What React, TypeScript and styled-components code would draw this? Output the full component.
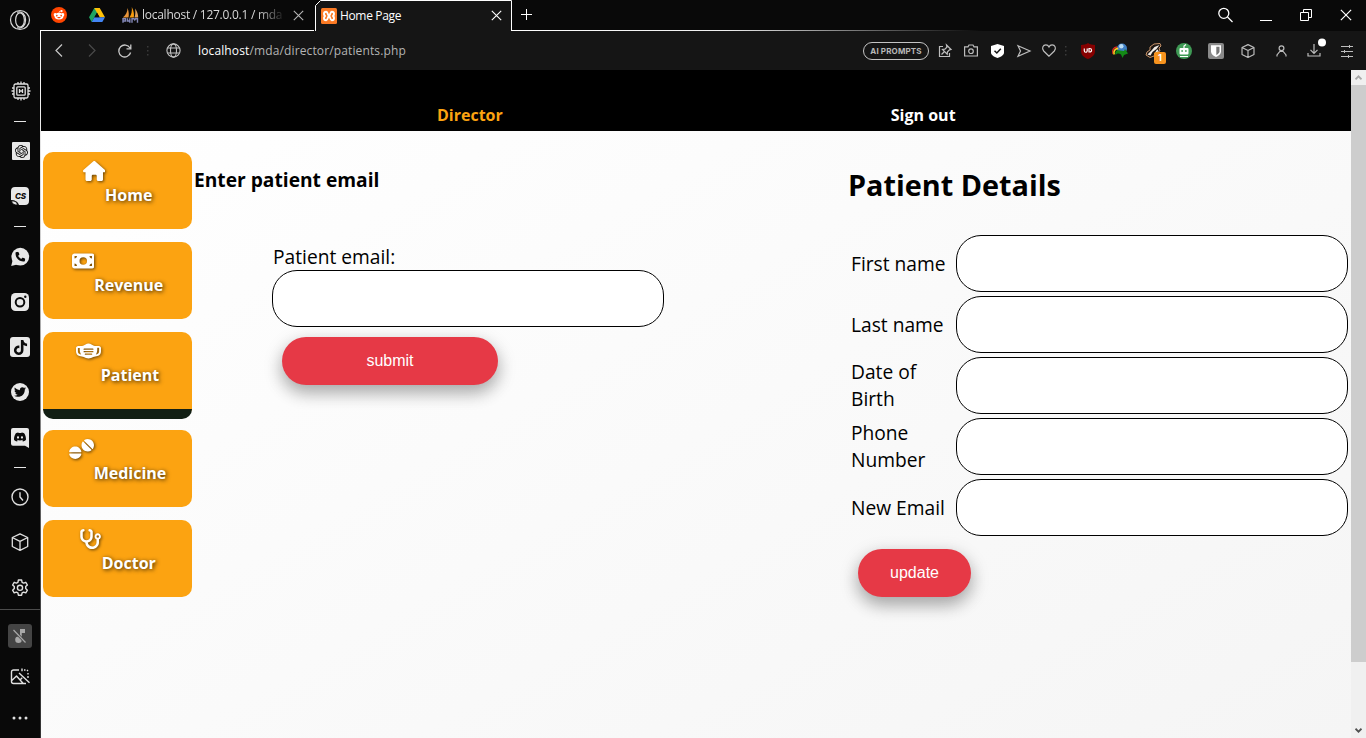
import React from 'react';
import styled, { createGlobalStyle, css } from 'styled-components';
import { FaHouse, FaMoneyBill, FaMaskFace, FaTablets, FaStethoscope, FaTiktok, FaTwitter, FaDiscord, FaPhone, FaRedditAlien } from 'react-icons/fa6';
import { SiOpenai } from 'react-icons/si';

const GlobalStyle = createGlobalStyle`
  *, *::before, *::after { box-sizing: border-box; }
  body { margin: 0; background: #090909; overflow: hidden; }
  svg { display: block; flex: none; }
`;

const Window = styled.div`
  display: flex;
  width: 1366px;
  height: 738px;
  background: #090909;
  font-family: 'Open Sans', sans-serif;
`;

/* ---------- browser side rail ---------- */
const Rail = styled.aside`
  display: flex;
  flex-direction: column;
  width: 41px;
  height: 738px;
  flex: none;
  background: linear-gradient(#fff, #cfcfcf 30%, #4a4a4a 75%, #333) no-repeat 40px 30px / 1px 708px;
`;

const RailSlot = styled.div<{ $h: number; $drop?: number; $shift?: number }>`
  display: flex;
  align-items: center;
  justify-content: center;
  width: 40px;
  height: ${(p) => p.$h}px;
  padding: ${(p) => p.$drop ?? 0}px 0 0 ${(p) => p.$shift ?? 0}px;
  flex: none;
`;

const RailDash = styled.span`
  width: 12px;
  height: 1px;
  background: #e6e6e6;
`;

const RailRule = styled.hr`
  width: 40px;
  height: 1px;
  margin: 0;
  border: 0;
  flex: none;
  background: #4c4c4c;
`;

const AppTile = styled.span<{ $size?: number; $radius?: number }>`
  display: flex;
  align-items: center;
  justify-content: center;
  width: ${(p) => p.$size ?? 18}px;
  height: ${(p) => p.$size ?? 18}px;
  border-radius: ${(p) => p.$radius ?? 4}px;
  background: #e8e8e8;
  color: #0b0b0b;
`;

const MutedTile = styled.span`
  display: flex;
  align-items: center;
  justify-content: center;
  width: 24px;
  height: 24px;
  border-radius: 3px;
  background: #444;
`;

/* ---------- browser top ---------- */
const Frame = styled.div`
  display: flex;
  flex-direction: column;
  width: 1325px;
`;

const TabStrip = styled.div`
  display: flex;
  height: 31px;
  flex: none;
`;

const RestingTabs = styled.div`
  display: flex;
  align-items: center;
  width: 274px;
  height: 31px;
  margin-left: -1px;
  border-bottom: 1px solid #fff;
`;

const TabSlot = styled.div<{ $w: number; $end?: boolean }>`
  display: flex;
  justify-content: ${(p) => (p.$end ? 'flex-end' : 'center')};
  padding-right: ${(p) => (p.$end ? 3 : 0)}px;
  width: ${(p) => p.$w}px;
  flex: none;
`;

const TabTitle = styled.span<{ $active?: boolean }>`
  overflow: hidden;
  white-space: nowrap;
  font-size: 12px;
  line-height: 16px;
  ${(p) =>
    p.$active
      ? css`
          width: 148px;
          color: #fff;
          letter-spacing: -0.35px;
        `
      : css`
          width: 148px;
          color: #d8d8d8;
          letter-spacing: -0.26px;
          mask-image: linear-gradient(90deg, #000 78%, transparent 97%);
        `}
`;

const ActiveTab = styled.div`
  position: relative;
  display: flex;
  align-items: center;
  width: 197px;
  height: 31px;
  margin-left: 1px;
`;

const TabOutline = styled.svg`
  position: absolute;
  left: 0;
  top: 0;
`;

const TabBody = styled.div`
  position: relative;
  display: flex;
  align-items: center;
  width: 100%;
  padding-left: 6px;
  gap: 3px;
`;

const StripRest = styled.div`
  display: flex;
  flex: 1;
  align-items: center;
  justify-content: space-between;
  padding: 0 0 1px 9px;
  background: linear-gradient(90deg, #fff, #eee 25%, #444 47%, transparent 55%) no-repeat 0 30px / 100% 1px;
`;

const WindowButtons = styled.div`
  display: flex;
  align-items: center;
  height: 30px;
`;

const Toolbar = styled.div`
  display: flex;
  align-items: center;
  height: 39px;
  flex: none;
  padding-left: 1px;
  background: #151515;
`;

const Slot = styled.div<{ $w: number; $shift?: number }>`
  position: relative;
  display: flex;
  align-items: center;
  justify-content: center;
  width: ${(p) => p.$w}px;
  padding-left: ${(p) => p.$shift ?? 0}px;
  height: 100%;
  flex: none;
  > svg { overflow: visible; }
`;

const Address = styled.div`
  padding-left: 6px;
  font-size: 12px;
  letter-spacing: 0.13px;
  color: #b4b4b4;
  b { font-weight: 400; color: #fff; }
`;

const ToolbarEnd = styled.div`
  display: flex;
  align-items: center;
  height: 100%;
  margin-left: auto;
`;

const PromptPill = styled.span`
  display: flex;
  align-items: center;
  justify-content: center;
  width: 66px;
  height: 18px;
  border: 1px solid #c4c4c4;
  border-radius: 9px;
  font: 700 8px/10px Inter, sans-serif;
  letter-spacing: 0.15px;
  color: #b8b8b8;
`;

const Badge = styled.span`
  position: absolute;
  left: 23px;
  top: 21px;
  width: 12px;
  height: 12px;
  border-radius: 2px;
  background: #f7931e;
  color: #fff;
  font: 700 9px/12px Inter, sans-serif;
  text-align: center;
`;

/* ---------- page ---------- */
const Viewport = styled.div`
  display: flex;
  height: 668px;
`;

const Page = styled.div`
  width: 1310px;
  display: flex;
  flex-direction: column;
`;

const Nav = styled.nav`
  display: flex;
  gap: 388px;
  height: 61px;
  flex: none;
  padding: 34px 0 0 396px;
  background: #000;
`;

const NavLink = styled.a<{ $current?: boolean }>`
  font-size: 16px;
  font-weight: 700;
  line-height: 22px;
  color: ${(p) => (p.$current ? '#fca311' : '#fff')};
`;

const Main = styled.main`
  display: flex;
  flex: 1;
  background: linear-gradient(150deg, #fff, #f5f5f5);
`;

const Menu = styled.div`
  display: flex;
  flex-direction: column;
  gap: 13px;
  width: 151px;
  padding: 21px 0 0 2px;
`;

const MenuCard = styled.a<{ $active?: boolean; $iconWidth: number }>`
  display: flex;
  justify-content: center;
  width: 149px;
  height: 77px;
  padding-top: 9px;
  border-radius: 10px;
  background: #fca311;
  color: #fff;
  ${(p) =>
    p.$active &&
    css`
      height: 87px;
      margin-bottom: -2px;
      border-bottom: 10px solid #121f14;
    `}
  svg {
    width: ${(p) => p.$iconWidth}px;
    height: 20px;
    filter: drop-shadow(1px 1px 1.5px rgba(0, 0, 0, 0.6));
  }
`;

const MenuText = styled.span`
  padding-top: 23px;
  font-size: 16px;
  font-weight: 700;
  line-height: 22px;
  text-shadow: 1px 1px 4px rgba(0, 0, 0, 0.8);
`;

const LookupPanel = styled.section`
  width: 654px;
  padding: 35px 0 0 2px;
`;

const LookupTitle = styled.h3`
  margin: 0;
  font-size: 19.2px;
  line-height: 27px;
`;

const LookupForm = styled.form`
  display: flex;
  flex-direction: column;
  align-items: flex-start;
  padding: 50px 0 0 78px;
  > label { padding-left: 1px; }
`;

const Label = styled.label`
  font-size: 19.2px;
  line-height: 27px;
  color: #000;
`;

const TextField = styled.input`
  display: block;
  width: 392px;
  height: 57px;
  padding: 0 20px;
  border: 1px solid #000;
  border-radius: 25px;
  background: #fff;
  outline: none;
  flex: none;
`;

const PillButton = styled.button<{ $w: number }>`
  width: ${(p) => p.$w}px;
  height: 48px;
  padding: 0;
  border: 0;
  border-radius: 25px;
  background: #e63946;
  color: #fff;
  font: 16px 'Liberation Sans', sans-serif;
  box-shadow: 0 8px 16px rgba(0, 0, 0, 0.2), 0 6px 20px rgba(0, 0, 0, 0.19);
`;

const SubmitRow = styled.div`
  padding: 10px 0 0 10px;
`;

const DetailsPanel = styled.section`
  flex: 1;
  padding: 34px 0 0 2px;
`;

const DetailsTitle = styled.h2`
  margin: 0;
  font-size: 28.8px;
  line-height: 40px;
`;

const DetailsForm = styled.form`
  display: flex;
  flex-direction: column;
  gap: 4px;
  padding: 30px 0 0 2px;
`;

const FieldRow = styled.div`
  display: grid;
  grid-template-columns: 106px 392px;
  align-items: center;
  ${Label} { padding: 0 3px 0.6px 1px; }
`;

const UpdateRow = styled.div`
  padding: 9px 0 0 8px;
`;

const ScrollTrack = styled.div`
  display: flex;
  flex-direction: column;
  justify-content: space-between;
  width: 15px;
  background: #f0f0f0;
`;

const ScrollButton = styled.div`
  display: flex;
  align-items: center;
  justify-content: center;
  height: 15px;
`;

const ScrollThumb = styled.div`
  height: 577px;
  margin-bottom: auto;
  background: #cdcdcd;
`;

/* ---------- drawings ---------- */
const line = (color = '#bdbdbd', w = 1.2) => ({ fill: 'none', stroke: color, strokeWidth: w });

const OperaMark = () => (
  <svg width="22" height="22" viewBox="0 0 22 22" {...line('#d8d8d8', 1.2)}>
    <circle cx="11" cy="11" r="9.5" />
    <ellipse cx="11" cy="11" rx="4.4" ry="7.2" />
    <path d="M8 3.2c5-1.6 8.6 2.4 8.6 7.8s-3.600 9.400-8.600 7.800" />
  </svg>
);

const Chip = () => (
  <svg width="20" height="20" viewBox="0 0 20 20" {...line('#e0e0e0', 1.3)}>
    <rect x="3" y="3" width="14" height="14" rx="1.5" />
    <rect x="5.800" y="5.800" width="8.400" height="8.400" rx="1" />
    <path d="M8.500 8v4M11.500 8v4M8.500 10h3M7 3V1M10 3V.5M13 3V1M7 17v2M10 17v2.500M13 17v2M3 7H1M3 10H.5M3 13H1M17 7h2M17 10h2.500M17 13h2" />
  </svg>
);

const CsBubble = () => (
  <svg width="20" height="20" viewBox="0 0 20 20">
    <path d="M5 1h10a4 4 0 0 1 4 4v10a4 4 0 0 1-4 4H9C8 16 6 14.500 1 14V5a4 4 0 0 1 4-4z" fill="#e8e8e8" />
    <path d="M1.500 15c3.500-.4 5.500 1 6 4-3.200.2-5.400-1-6-4z" fill="#e8e8e8" stroke="#0b0b0b" strokeWidth=".8" />
    <text x="10.500" y="13" textAnchor="middle" fontFamily="Inter, sans-serif" fontStyle="italic" fontWeight="800" fontSize="8" fill="#0b0b0b">CS</text>
  </svg>
);

const WhatsApp = () => (
  <svg width="20" height="20" viewBox="0 0 20 20">
    <circle cx="10.300" cy="9.700" r="8.900" fill="#e8e8e8" />
    <path d="M1.200 19l1.500-6 4.500 4.600z" fill="#e8e8e8" />
    <g transform="translate(5.300 4.700)">
      <FaPhone size={10} color="#0b0b0b" />
    </g>
  </svg>
);

const Instagram = () => (
  <svg width="18" height="18" viewBox="0 0 18 18">
    <rect width="18" height="18" rx="4.500" fill="#e8e8e8" />
    <circle cx="9" cy="9.200" r="4.300" fill="none" stroke="#0b0b0b" strokeWidth="2" />
    <circle cx="14.300" cy="3.700" r="1.200" fill="#0b0b0b" />
  </svg>
);

const Discord = () => (
  <svg width="18" height="20" viewBox="0 0 18 20">
    <path d="M2 0h14a2 2 0 0 1 2 2v18l-4-2.200H2a2 2 0 0 1-2-2V2a2 2 0 0 1 2-2z" fill="#e8e8e8" />
    <g transform="translate(2.500 2.500)">
      <FaDiscord size={13} color="#0b0b0b" />
    </g>
  </svg>
);

const ClockFace = () => (
  <svg width="18" height="18" viewBox="0 0 18 18" {...line('#e0e0e0', 1.4)}>
    <circle cx="9" cy="9" r="8" />
    <path d="M9 4.200V9l3 3.500" />
  </svg>
);

const Cube = ({ size = 18, color = '#e0e0e0' }: { size?: number; color?: string }) => (
  <svg width={size} height={size} viewBox="0 0 18 18" {...line(color, size > 15 ? 1.3 : 1.5)} strokeLinejoin="round">
    <path d="M9 .8l7.700 3.700v9L9 17.300 1.300 13.500v-9zM1.300 4.500L9 8.400l7.700-3.900M9 8.400v8.900" />
  </svg>
);

const Gear = () => (
  <svg width="18" height="18" viewBox="0 0 18 18" {...line('#e0e0e0', 1.4)} strokeLinejoin="round">
    <path d="M7.400 1h3.200l.5 2.300 1.500.8 2.200-.8 1.600 2.700-1.700 1.600v2l1.700 1.600-1.600 2.700-2.200-.8-1.500.8-.5 2.300H7.400l-.5-2.300-1.500-.8-2.200.8-1.600-2.700 1.700-1.600v-2L1.600 6l1.600-2.700 2.200.8 1.500-.8z" />
    <circle cx="9" cy="8.800" r="2.600" />
  </svg>
);

const MutedNote = () => (
  <svg width="16" height="16" viewBox="0 0 16 16">
    <path d="M8 1h5v4H9.800v7H8z" fill="#a8a8a8" />
    <circle cx="6.500" cy="11.800" r="3.300" fill="#a8a8a8" />
    <path d="M1.500 2l12 12.500" stroke="#444" strokeWidth="2.600" />
    <path d="M1.500 2l12 12.500" stroke="#a8a8a8" strokeWidth="1.200" />
  </svg>
);

const NoImage = () => (
  <svg width="20" height="18" viewBox="0 0 20 18" {...line('#e0e0e0', 1.4)} strokeLinejoin="round">
    <path d="M9 2H3.500a2 2 0 0 0-2 2v9.500a2 2 0 0 0 2 2h12.500M1.800 12.500l4.700-4.500 6.500 7.200M10.500 11.500l1.700-1.800M9 5l10.500 9.800M12 .5v2.800M14 2h1.500M17 2l1 1M18 5v1.500M18 8v2" />
  </svg>
);

const Dots = () => (
  <svg width="16" height="4" viewBox="0 0 16 4" fill="#e0e0e0">
    <circle cx="2" cy="2" r="1.500" />
    <circle cx="8" cy="2" r="1.500" />
    <circle cx="14" cy="2" r="1.500" />
  </svg>
);

const RedditMark = () => (
  <svg width="16" height="16" viewBox="0 0 16 16">
    <circle cx="8" cy="8" r="8" fill="#ff4500" />
    <g transform="translate(2.500 2.200)">
      <FaRedditAlien size={11} color="#fff" />
    </g>
  </svg>
);

const DriveMark = () => (
  <svg width="16" height="14" viewBox="0 0 16 14">
    <path d="M5.300 0h5.400l-2.700 4.700L2.700 14 0 9.300z" fill="#1ea362" />
    <path d="M5.300 0h5.400L16 9.300h-5.400z" fill="#ffc107" />
    <path d="M5.400 9.300H16L13.300 14H2.700z" fill="#4285f4" />
    <path d="M8 4.700l2.600 4.600H5.400z" fill="#090909" />
  </svg>
);

const SailMark = () => (
  <svg width="17" height="16" viewBox="0 0 17 16">
    <path d="M5.500 1C7 5 7 8 6.500 10.500H.8C4 8 5.500 5 5.500 1z" fill="#e8953a" />
    <path d="M9.800 0C12 4 12.300 7.500 11.800 10.500H7.300C9.500 7.500 10.200 4 9.800 0z" fill="#f89c0e" />
    <path d="M13 1.500c2.300 2.800 3.200 6 3.200 9h-3.700c1-3 1.100-6 .5-9z" fill="#e0a25c" />
    <path d="M1 15.700v-4h2.500v2.300H1M5.500 11.300V14h2.300v-2.700M7.800 13v2.700M10 15.700v-4h2l.8 1.300.8-1.300h1.900v4" fill="none" stroke="#8388b8" strokeWidth="1.400" />
  </svg>
);

const XamppMark = () => (
  <svg width="16" height="16" viewBox="0 0 16 16">
    <rect width="16" height="16" rx="1.500" fill="#fb7a24" />
    <path d="M5.200 3.800C3.800 3.800 3 4.600 3 5.800S3.700 8 4.800 8C3.700 8 3 9 3 10.200s.8 2 2.200 2C7 12.200 6.800 8 8 8s1 4.200 2.800 4.200c1.400 0 2.200-.8 2.200-2S12.300 8 11.200 8C12.300 8 13 7 13 5.800s-.8-2-2.200-2C9 3.800 9.200 8 8 8S7 3.800 5.200 3.800z" fill="none" stroke="#fff" strokeWidth="1.900" />
  </svg>
);

const Cross = ({ size = 11, color = '#fff' }: { size?: number; color?: string }) => (
  <svg width={size} height={size} viewBox="0 0 11 11" {...line(color, 1.1)}>
    <path d="M.8.8l9.400 9.400M10.200.8L.8 10.200" />
  </svg>
);

const Separator = () => (
  <svg width="2" height="12" viewBox="0 0 2 12" fill="#3a3a3a">
    <path d="M0 1h1.500v1.500H0zM0 5h1.500v1.500H0zM0 9h1.500v1.500H0z" />
  </svg>
);

const Globe = () => (
  <svg width="15" height="15" viewBox="0 0 15 15" {...line('#c4c4c4', 1.1)}>
    <circle cx="7.500" cy="7.500" r="6.600" />
    <ellipse cx="7.500" cy="7.500" rx="3" ry="6.600" />
    <path d="M1.800 5h11.400M1.800 10h11.400" />
  </svg>
);

const PinNote = () => (
  <svg width="14" height="14" viewBox="0 0 14 14" {...line()}>
    <path d="M5 2.500H1.500v10h10V9M3.500 10.500l3-3M8.500 1l4.500 4.500-1.500.3-2 2-.3 2.400L4.500 5.500l2.400-.3 2-2z" />
  </svg>
);

const Camera = () => (
  <svg width="14" height="13" viewBox="0 0 14 13" {...line()}>
    <path d="M.6 2.800H4L5 1h4l1 1.800h3.400v9.200H.6z" />
    <circle cx="7" cy="7.200" r="2.300" />
  </svg>
);

const ShieldCheck = () => (
  <svg width="13" height="14" viewBox="0 0 13 14">
    <path d="M6.500 0L13 2v6.500c0 2.500-3 4.500-6.500 5.500C3 13 0 11 0 8.500V2z" fill="#fff" />
    <path d="M3.500 6.800l2.300 2.200 4-4.200" fill="none" stroke="#151515" strokeWidth="1.500" />
  </svg>
);

const SendArrow = () => (
  <svg width="14" height="12" viewBox="0 0 14 12" {...line()}>
    <path d="M1 .8L13 6 1 11.200 3.500 6z" />
  </svg>
);

const Heart = () => (
  <svg width="14" height="13" viewBox="0 0 14 13" {...line()}>
    <path d="M7 12.200L1.700 7C-.6 4.200 1 .8 3.900.8 5.600.8 6.500 1.800 7 2.900 7.500 1.800 8.400.8 10.100.8 13 .8 14.600 4.200 12.300 7z" />
  </svg>
);

const UblockMark = () => (
  <svg width="14" height="16" viewBox="0 0 14 16">
    <path d="M7 0c2 1.500 4.500 1.900 7 1.900V8c0 4-3 6.500-7 8-4-1.500-7-4-7-8V1.900C2.500 1.900 5 1.500 7 0z" fill="#850000" />
    <path d="M3.300 5.500v2.300a1.200 1.200 0 0 0 2.900 0V5.500M8 5.500v3.500h.8a1.750 1.750 0 0 0 0-3.500z" fill="none" stroke="#fff" strokeWidth="1.200" />
  </svg>
);

const DownloaderMark = () => (
  <svg width="16" height="15" viewBox="0 0 16 15">
    <circle cx="10" cy="5.500" r="5" fill="#3f7fc4" />
    <circle cx="9.300" cy="3.300" r="2.200" fill="#b7dcf4" />
    <path d="M1 11C-.3 7 1.500 4.300 5 4" fill="none" stroke="#d92b1f" strokeWidth="1.300" />
    <path d="M2.200 11.500C1.200 8 3 5.600 6.200 5.400" fill="none" stroke="#ffd21f" strokeWidth="1.600" />
    <path d="M3.700 12C2.300 8.500 4.500 6.500 8 7.500l4 .5 1-2 3 4.500-4 1.500-1.500 3-1.500-3.500C7 10 5 10 3.700 12z" fill="#138a16" />
  </svg>
);

const BadgerMark = () => (
  <svg width="17" height="15" viewBox="0 0 17 15">
    <path d="M1 12l1-3 3-2V4l4-3 6-.5 1 2.500-2 2 1 3-3 1-3 4-4 1.500z" fill="#1d1714" stroke="#dba273" strokeWidth=".9" />
    <path d="M2.500 11.500l4-4 3-3.500 5-2-3 4-4 3-2 3.500zM9 11l3-4.500 1.500.5-2 3.500z" fill="#f4eee8" />
  </svg>
);

const RobotMark = () => (
  <svg width="16" height="16" viewBox="0 0 16 16">
    <circle cx="8" cy="8" r="8" fill="#3f9a55" />
    <path d="M8 5V3l2-1.500M4 13.500h8" fill="none" stroke="#fff" strokeWidth="1.200" />
    <rect x="3.500" y="5" width="9" height="6.500" rx="1" fill="#fff" />
    <path d="M5.300 7.200h1.700v1.600H5.300zM9 7.200h1.700v1.600H9z" fill="#3f9a55" />
  </svg>
);

const VaultMark = () => (
  <svg width="16" height="16" viewBox="0 0 16 16">
    <rect width="16" height="16" rx="2" fill="#8a8a8a" />
    <path d="M3 2.200h10v6c0 2.800-2.200 4.500-5 5.800-2.800-1.300-5-3-5-5.800z" fill="#fff" />
    <path d="M8.300 3.800h3.200v4.500c0 1.700-1.300 2.700-3.200 3.700z" fill="#777" />
  </svg>
);

const Person = () => (
  <svg width="11" height="12" viewBox="0 0 11 12" {...line()}>
    <circle cx="5.500" cy="3.200" r="2.400" />
    <path d="M1 11.500V10l2.800-3.500h3.400L10 10v1.500" />
  </svg>
);

const Download = () => (
  <svg width="14" height="13" viewBox="0 0 14 13" {...line()}>
    <path d="M1 9v3h12V9M7 0v9M3.500 5.800L7 9.300l3.500-3.500" />
    <circle cx="15" cy="-1.500" r="4" fill="#fff" stroke="none" />
  </svg>
);

const Sliders = () => (
  <svg width="12" height="12" viewBox="0 0 12 12" {...line('#bdbdbd', 1)}>
    <path d="M0 1.500h12M0 6.500h12M0 11.500h12M8.500 0v3M3.500 5v3M7.500 10v3" />
  </svg>
);

const menu = [
  { label: 'Home', Icon: FaHouse, width: 22.5 },
  { label: 'Revenue', Icon: FaMoneyBill, width: 22.5 },
  { label: 'Patient', Icon: FaMaskFace, width: 25, active: true },
  { label: 'Medicine', Icon: FaTablets, width: 25 },
  { label: 'Doctor', Icon: FaStethoscope, width: 22.5 },
];

const fields = ['First name', 'Last name', 'Date of Birth', 'Phone Number', 'New Email'];

const SideRail = () => (
  <Rail>
    <RailSlot $h={40}><OperaMark /></RailSlot>
    <RailSlot $h={31} />
    <RailSlot $h={40} $shift={2}><Chip /></RailSlot>
    <RailSlot $h={20}><RailDash /></RailSlot>
    <RailSlot $h={40} $shift={2}><AppTile $radius={1}><SiOpenai size={13} /></AppTile></RailSlot>
    <RailSlot $h={50}><CsBubble /></RailSlot>
    <RailSlot $h={10}><RailDash /></RailSlot>
    <RailSlot $h={52}><WhatsApp /></RailSlot>
    <RailSlot $h={38}><Instagram /></RailSlot>
    <RailSlot $h={52}><AppTile $size={20} $radius={3}><FaTiktok size={15} /></AppTile></RailSlot>
    <RailSlot $h={38}><AppTile $radius={9}><FaTwitter size={12} /></AppTile></RailSlot>
    <RailSlot $h={52} $drop={1}><Discord /></RailSlot>
    <RailSlot $h={8}><RailDash /></RailSlot>
    <RailSlot $h={52}><ClockFace /></RailSlot>
    <RailSlot $h={38}><Cube /></RailSlot>
    <RailSlot $h={48} $drop={5}><Gear /></RailSlot>
    <RailRule />
    <RailSlot $h={52}><MutedTile><MutedNote /></MutedTile></RailSlot>
    <RailSlot $h={28} $drop={2}><NoImage /></RailSlot>
    <RailSlot $h={48} $drop={8}><Dots /></RailSlot>
  </Rail>
);

export default function App() {
  return (
    <Window>
      <GlobalStyle />
      <SideRail />
      <Frame>
        <TabStrip>
          <RestingTabs>
            <TabSlot $w={38}><RedditMark /></TabSlot>
            <TabSlot $w={38}><DriveMark /></TabSlot>
            <TabSlot $w={26} $end><SailMark /></TabSlot>
            <TabTitle>localhost / 127.0.0.1 / mda</TabTitle>
            <TabSlot $w={17}><Cross color="#b5b5b5" /></TabSlot>
          </RestingTabs>
          <ActiveTab>
            <TabOutline width="198" height="31" viewBox="0 0 198 31">
              <path d="M.5 31V5.500l5-5h191V31" fill="#151515" stroke="#fff" />
            </TabOutline>
            <TabBody>
              <XamppMark />
              <TabTitle $active>Home Page</TabTitle>
              <Cross />
            </TabBody>
          </ActiveTab>
          <StripRest>
            <svg width="12" height="12" viewBox="0 0 12 12" {...line('#fff', 1)}>
              <path d="M0 5.500h11M5.500 0v11" />
            </svg>
            <WindowButtons>
              <Slot $w={39}>
                <svg width="15" height="15" viewBox="0 0 15 15" {...line('#fff', 1.3)}>
                  <circle cx="5.800" cy="5.300" r="5" />
                  <path d="M9.500 9l5 5" />
                </svg>
              </Slot>
              <Slot $w={41}>
                <svg width="12" height="12" viewBox="0 0 12 12" {...line('#fff', 1)}>
                  <path d="M0 11.500h12" />
                </svg>
              </Slot>
              <Slot $w={40}>
                <svg width="12" height="12" viewBox="0 0 12 12" {...line('#fff', 1)}>
                  <path d="M.5 3.500h8v8h-8zM3.500 3.500v-3h8v8h-3" />
                </svg>
              </Slot>
              <Slot $w={40}><Cross size={12} /></Slot>
            </WindowButtons>
          </StripRest>
        </TabStrip>
        <Toolbar>
          <Slot $w={34}>
            <svg width="8" height="13" viewBox="0 0 8 13" {...line('#c8c8c8', 1.2)}><path d="M7 .5l-6 6 6 6" /></svg>
          </Slot>
          <Slot $w={32}>
            <svg width="8" height="13" viewBox="0 0 8 13" {...line('#4a4a4a', 1.2)}><path d="M1 .5l6 6-6 6" /></svg>
          </Slot>
          <Slot $w={34}>
            <svg width="14" height="14" viewBox="0 0 14 14" {...line('#c8c8c8', 1.3)}>
              <path d="M12.600 8.500a6 6 0 1 1-.6-4.500M12.800.5v4.300H8.500" />
            </svg>
          </Slot>
          <Slot $w={12}><Separator /></Slot>
          <Slot $w={38}><Globe /></Slot>
          <Address><b>localhost</b>/mda/director/patients.php</Address>
          <ToolbarEnd>
            <PromptPill>AI PROMPTS</PromptPill>
            <Slot $w={32}><PinNote /></Slot>
            <Slot $w={20}><Camera /></Slot>
            <Slot $w={32}><ShieldCheck /></Slot>
            <Slot $w={20} $shift={1}><SendArrow /></Slot>
            <Slot $w={32}><Heart /></Slot>
            <Slot $w={2}><Separator /></Slot>
            <Slot $w={42}><UblockMark /></Slot>
            <Slot $w={22}><DownloaderMark /></Slot>
            <Slot $w={44}><BadgerMark /><Badge>1</Badge></Slot>
            <Slot $w={18}><RobotMark /></Slot>
            <Slot $w={46}><VaultMark /></Slot>
            <Slot $w={17}><Cube size={14} color="#bdbdbd" /></Slot>
            <Slot $w={50}><Person /></Slot>
            <Slot $w={16}><Download /></Slot>
            <Slot $w={44} $shift={6}><Sliders /></Slot>
          </ToolbarEnd>
        </Toolbar>
        <Viewport>
          <Page>
            <Nav>
              <NavLink $current>Director</NavLink>
              <NavLink>Sign out</NavLink>
            </Nav>
            <Main>
              <Menu>
                {menu.map(({ label, Icon, width, active }) => (
                  <MenuCard key={label} $active={active} $iconWidth={width}>
                    <Icon />
                    <MenuText>{label}</MenuText>
                  </MenuCard>
                ))}
              </Menu>
              <LookupPanel>
                <LookupTitle>Enter patient email</LookupTitle>
                <LookupForm>
                  <Label>Patient email:</Label>
                  <TextField type="text" />
                  <SubmitRow><PillButton type="button" $w={216}>submit</PillButton></SubmitRow>
                </LookupForm>
              </LookupPanel>
              <DetailsPanel>
                <DetailsTitle>Patient Details</DetailsTitle>
                <DetailsForm>
                  {fields.map((name) => (
                    <FieldRow key={name}>
                      <Label>{name}</Label>
                      <TextField type="text" />
                    </FieldRow>
                  ))}
                  <UpdateRow><PillButton type="button" $w={113}>update</PillButton></UpdateRow>
                </DetailsForm>
              </DetailsPanel>
            </Main>
          </Page>
          <ScrollTrack>
            <ScrollButton>
              <svg width="7" height="5" viewBox="0 0 7 5" {...line('#a8a8a8', 1.8)}><path d="M.5 4.300l3-3 3 3" /></svg>
            </ScrollButton>
            <ScrollThumb />
            <ScrollButton>
              <svg width="7" height="5" viewBox="0 0 7 5" {...line('#505050', 1.8)}><path d="M.5.7l3 3 3-3" /></svg>
            </ScrollButton>
          </ScrollTrack>
        </Viewport>
      </Frame>
    </Window>
  );
}
